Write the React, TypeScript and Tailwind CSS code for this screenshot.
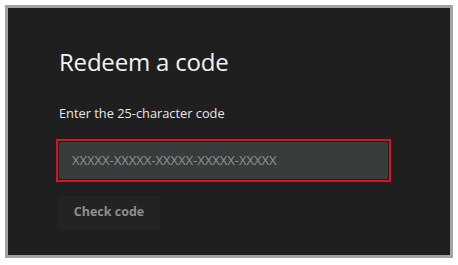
export default function App() {
  return (
    <div className="w-[458px] h-[265px] bg-white pt-[5px] pl-[5px]" style={{ fontFamily: '"Open Sans", "Noto Sans", sans-serif' }}>
      <div className="w-[448px] h-[253px] border-[3px] border-[#a3a3a3] bg-[#1f1f1f]">
        <div className="pl-[51px] pt-[38px] flex flex-col">
          <h1 className="text-[24px] leading-[32px] text-[#f2f2f2] font-normal tracking-[-0.2px]">Redeem a code</h1>
          <p className="mt-[26px] text-[12.8px] leading-[18px] text-[#e8e8e8]">Enter the 25-character code</p>
          <div className="mt-[17px] -ml-[3px] w-[335px] h-[43px] border-2 border-[#d81323] p-[1px]">
            <div className="h-full bg-[#373d3d] rounded-[2px] flex items-center pl-[13px]">
              <span className="text-[13.2px] text-[#8c9292] tracking-[-0.1px]">XXXXX-XXXXX-XXXXX-XXXXX-XXXXX</span>
            </div>
          </div>
          <div className="mt-[14px] -ml-[1px] w-[102px] h-[33px] bg-[#232323] flex items-center justify-center">
            <span className="text-[12.5px] font-bold text-[#8e8e8e]">Check code</span>
          </div>
        </div>
      </div>
    </div>
  );
}
